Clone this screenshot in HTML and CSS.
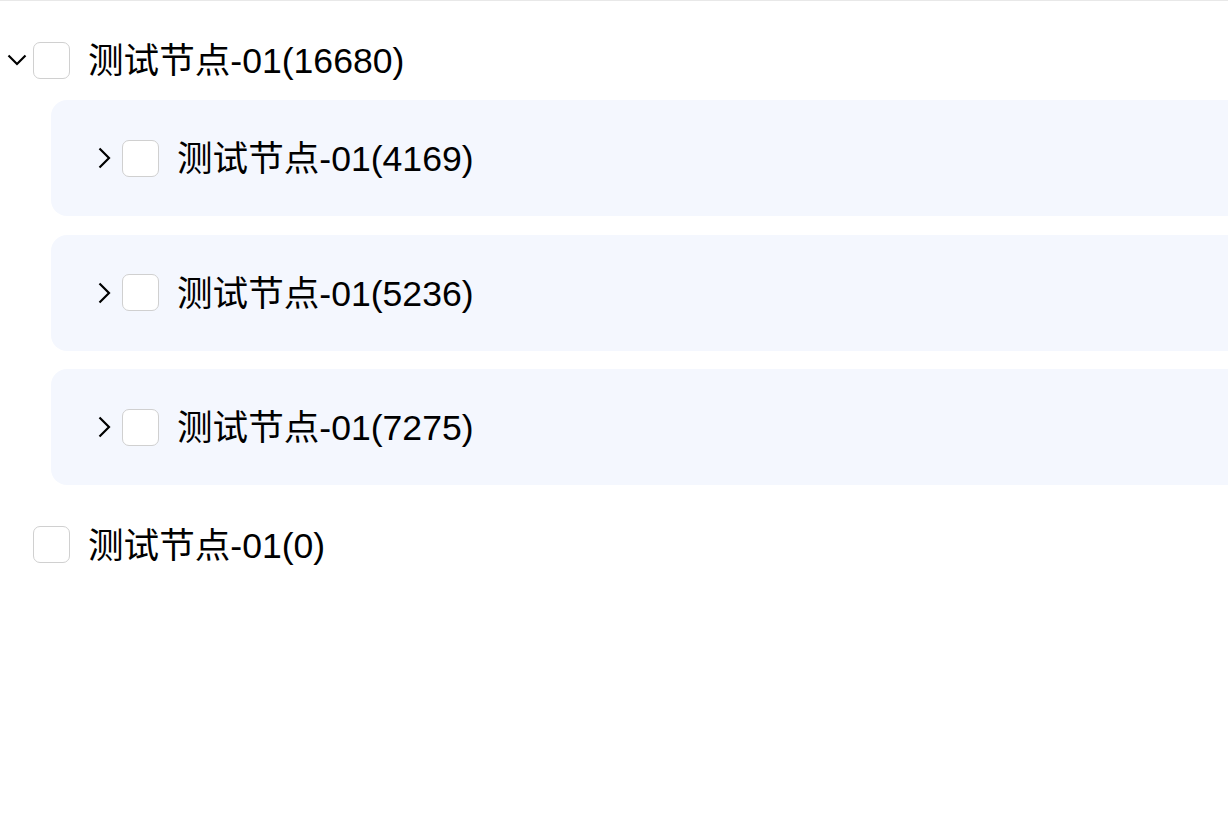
FILE: index.html
```html
<!DOCTYPE html>
<html lang="zh-CN">
<head>
    <meta charset="UTF-8">
    <meta name="viewport" content="width=device-width, initial-scale=1.0">
    <title>Tree</title>
    <link rel="stylesheet" href="styles.css">
</head>
<body>
    <div class="tree">
        <div class="node">
            <div class="node-row">
                <span class="arrow">
                    <svg width="20" height="12" viewBox="0 0 20 12"><path d="M1.5 1.5 L10 10 L18.5 1.5" fill="none" stroke="#000" stroke-width="2.2"/></svg>
                </span>
                <span class="check"></span>
                <span class="label">测试节点-01(16680)</span>
            </div>
            <div class="children">
                <div class="child-row">
                    <span class="arrow">
                        <svg class="right" width="13" height="22" viewBox="0 0 13 22"><path d="M1.5 1.5 L11 11 L1.5 20.5" fill="none" stroke="#000" stroke-width="2.2"/></svg>
                    </span>
                    <span class="check"></span>
                    <span class="label">测试节点-01(4169)</span>
                </div>
                <div class="child-row">
                    <span class="arrow">
                        <svg class="right" width="13" height="22" viewBox="0 0 13 22"><path d="M1.5 1.5 L11 11 L1.5 20.5" fill="none" stroke="#000" stroke-width="2.2"/></svg>
                    </span>
                    <span class="check"></span>
                    <span class="label">测试节点-01(5236)</span>
                </div>
                <div class="child-row">
                    <span class="arrow">
                        <svg class="right" width="13" height="22" viewBox="0 0 13 22"><path d="M1.5 1.5 L11 11 L1.5 20.5" fill="none" stroke="#000" stroke-width="2.2"/></svg>
                    </span>
                    <span class="check"></span>
                    <span class="label">测试节点-01(7275)</span>
                </div>
            </div>
        </div>
        <div class="node leaf">
            <div class="node-row">
                <span class="arrow"></span>
                <span class="check"></span>
                <span class="label">测试节点-01(0)</span>
            </div>
        </div>
    </div>
</body>
</html>
```

FILE: styles.css
```css
body {
    margin: 0;
    background-color: #fff;
    font-family: "Liberation Sans", Arial, "Noto Sans CJK SC", sans-serif;
    color: #000;
    overflow: hidden;
}
.tree {
    border-top: 1px solid #e8e8e8;
    padding-top: 19px;
}
.node-row, .child-row {
    display: flex;
    align-items: center;
}
.node-row {
    height: 80px;
}
.arrow {
    width: 33px;
    height: 37px;
    display: flex;
    align-items: center;
    justify-content: center;
    flex-shrink: 0;
}
.arrow .right {
    margin-right: 2px;
}
.check {
    width: 37px;
    height: 37px;
    box-sizing: border-box;
    border: 1px solid #d0d0d0;
    border-radius: 7px;
    background-color: #fff;
    flex-shrink: 0;
}
.label {
    margin-left: 18px;
    margin-top: 4px;
    font-size: 35.6px;
    line-height: 1;
    white-space: nowrap;
}
.children {
    margin-left: 51px;
    display: flex;
    flex-direction: column;
    gap: 18.5px;
}
.child-row {
    height: 116px;
    padding-left: 38px;
    margin-right: -20px;
    background-color: #f4f7fe;
    border-radius: 16px;
}
.leaf {
    margin-top: 19.5px;
}
```
